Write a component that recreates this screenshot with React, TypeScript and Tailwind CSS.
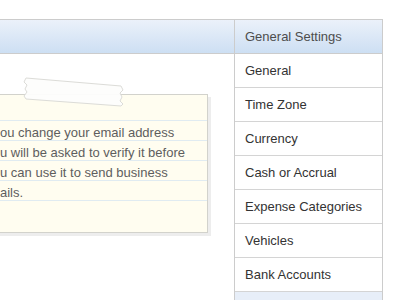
import React from "react";

const items = [
  "General",
  "Time Zone",
  "Currency",
  "Cash or Accrual",
  "Expense Categories",
  "Vehicles",
  "Bank Accounts",
];

const noteLines = [
  "ou change your email address",
  "u will be asked to verify it before",
  "u can use it to send business",
  "ails.",
];

export default function App() {
  return (
    <div
      className="w-[400px] h-[300px] bg-white overflow-hidden flex pt-[19px] text-[13px]"
      style={{ fontFamily: '"Liberation Sans", Arial, Helvetica, sans-serif' }}
    >
      <div className="w-[234px] flex flex-col shrink-0">
        <div className="h-[35px] border-y border-[#cccccc] bg-gradient-to-b from-[#ebf1fa] to-[#cddff3]" />
        <div className="relative flex-1">
          <div className="ml-[-32px] mt-[40px] w-[240px] border border-[#d2d2cc] bg-[#fffdf0] pl-[31px] pt-[25px] pb-[31px] shadow-[3px_3px_0_rgba(0,0,0,0.07)] text-[#5e5e5e]">
            <div className="border-t border-[#e0ebf1] -ml-[31px]">
              {noteLines.map((t) => (
                <div
                  key={t}
                  className="h-[20px] border-b border-[#e0ebf1] pl-[31px] pt-[5px] leading-[14px] whitespace-nowrap"
                >
                  {t}
                </div>
              ))}
            </div>
          </div>
          <svg
            className="absolute left-[20px] top-[20px]"
            width="110"
            height="36"
            viewBox="0 0 110 36"
          >
            <polygon
              points="6,4 101,12 103,16 100,19 102,23 100,27 103,30 101,32 6,25 4,22 7,18 5,15 7,11 4,8"
              fill="#fdfdfc"
              fillOpacity="0.95"
              stroke="#dcdcd8"
              strokeWidth="1"
            />
          </svg>
        </div>
      </div>
      <div className="w-[149px] shrink-0 border-x border-[#cccccc] flex flex-col">
        <div className="h-[35px] border-y border-[#cccccc] bg-gradient-to-b from-[#ebf1fa] to-[#cddff3] flex items-center pl-[10px] text-[#4d4d4d]">
          General Settings
        </div>
        {items.map((it) => (
          <div
            key={it}
            className="h-[34px] shrink-0 border-b border-[#d4d4d4] flex items-center pl-[10px] text-[#333333]"
          >
            {it}
          </div>
        ))}
        <div className="flex-1 bg-[#e7eef8]" />
      </div>
    </div>
  );
}
